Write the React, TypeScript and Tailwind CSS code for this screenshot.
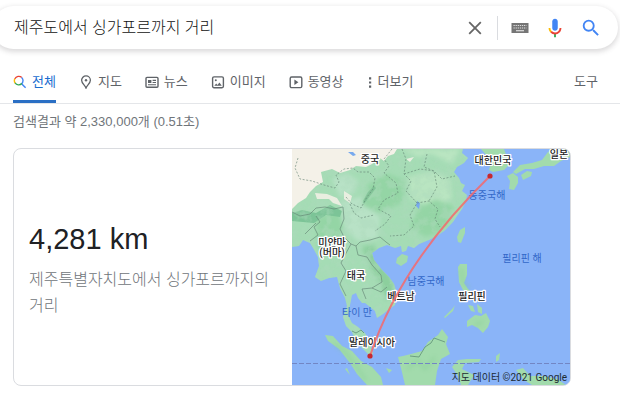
import React from 'react'

const searchPath =
  'M15.5 14h-.79l-.28-.27A6.471 6.471 0 0 0 16 9.5 6.5 6.5 0 1 0 9.5 16c1.61 0 3.09-.59 4.23-1.57l.27.28v.79l5 4.99L20.49 19l-4.99-5zm-6 0C7.01 14 5 11.99 5 9.5S7.01 5 9.5 5 14 7.01 14 9.5 11.99 14 9.5 14z'

const icons = {
  all: (
    <svg className="size-3.5" viewBox="0 0 14 14" fill="none" strokeWidth="1.4">
      <path d="M2.2 8.1A4.3 4.3 0 0 1 1.9 3.6" stroke="#fbbc05" />
      <path d="M1.9 3.8A4.3 4.3 0 0 1 8.8 2.6" stroke="#ea4335" />
      <path d="M8.6 2.4A4.3 4.3 0 0 1 8.6 8.8L12.6 12.8" stroke="#4285f4" />
      <path d="M8.8 8.6A4.3 4.3 0 0 1 2.1 7.9" stroke="#34a853" />
    </svg>
  ),
  map: (
    <svg className="size-3.5" viewBox="0 0 14 14" fill="none" stroke="currentColor" strokeWidth="1.3">
      <path d="M7 13C6.3 10.4 2.6 8.5 2.6 5.3a4.4 4.4 0 0 1 8.8 0C11.4 8.5 7.7 10.4 7 13z" />
      <circle cx="7" cy="5.3" r="1.2" fill="currentColor" stroke="none" />
    </svg>
  ),
  news: (
    <svg className="size-3.5" viewBox="0 0 14 14" fill="none" stroke="currentColor" strokeWidth="1.4">
      <rect x="1" y="2.4" width="12" height="9.8" rx="1" />
      <path d="M3 5h3.4v3H3z" fill="currentColor" stroke="none" />
      <path d="M7.6 5.4H11M7.6 7.5H11M3 9.7h8" strokeWidth="1.1" />
    </svg>
  ),
  image: (
    <svg className="size-3.5" viewBox="0 0 14 14" fill="none" stroke="currentColor" strokeWidth="1.4">
      <rect x="1.6" y="1.9" width="10.8" height="10.8" rx="1.4" />
      <path d="M3.3 10.8l1.9-2.4 1.3 1.5 1.9-2.4 2.4 3.3z" fill="currentColor" stroke="none" />
      <circle cx="4.8" cy="5.2" r="1" fill="currentColor" stroke="none" />
    </svg>
  ),
  video: (
    <svg className="size-3.5" viewBox="0 0 14 14" fill="none" stroke="currentColor" strokeWidth="1.4">
      <rect x="1.2" y="2" width="11.6" height="10.6" rx="1.4" />
      <path d="M5.4 4.6v5.4l4-2.7z" fill="currentColor" stroke="none" />
    </svg>
  ),
  more: (
    <svg className="h-3.5 w-1.5" viewBox="0 0 6 14" fill="currentColor">
      <path d="M2 2.2h2.2v2.2H2zM2 6.4h2.2v2.2H2zM2 10.6h2.2v2.2H2z" />
    </svg>
  ),
}

const tabs = [
  { label: '전체', icon: icons.all, active: true },
  { label: '지도', icon: icons.map },
  { label: '뉴스', icon: icons.news },
  { label: '이미지', icon: icons.image },
  { label: '동영상', icon: icons.video },
]

const countries = [
  { name: '중국', x: 78, y: 14 },
  { name: '미얀마', x: 40, y: 97 },
  { name: '(버마)', x: 40, y: 107 },
  { name: '대한민국', x: 201, y: 15 },
  { name: '일본', x: 267, y: 9 },
  { name: '태국', x: 64, y: 130 },
  { name: '베트남', x: 109, y: 151 },
  { name: '말레이시아', x: 80, y: 197 },
  { name: '필리핀', x: 180, y: 151 },
]

const seas = [
  { name: '동중국해', x: 195, y: 50 },
  { name: '필리핀 해', x: 230, y: 113 },
  { name: '남중국해', x: 134, y: 136 },
  { name: '타이 만', x: 65, y: 167 },
]

const mainland =
  'M0 0H171L170 4L176 9L172 14L165 18L162 23L167 29L169 34L173 36L170 42L175 46L174 52L170 60L165 67L161 73L152 82L145 87L137 91L127 95L122 99L116 97L114 102L110 103L109 97L103 99L95 96L87 99L80 104L82 111L90 121L97 128L102 135L105 145L103 156L96 161L91 165L85 169L83 162L78 158L73 154L70 154L66 149L64 144L60 146L58 156L56 166L60 174L66 178L73 184L78 194L81 205L77 206L69 198L63 191L60 183L54 177L51 168L55 157L53 149L48 139L45 128L37 129L29 132L23 128L27 117L26 108L21 99L18 94L11 91L7 97L0 98Z'

function WorldMap() {
  return (
    <svg className="block h-auto w-full" viewBox="0 0 278 236" role="img" aria-label="지도">
      <defs>
        <clipPath id="land">
          <path d={mainland} />
        </clipPath>
        <filter id="soft">
          <feGaussianBlur stdDeviation="2" />
        </filter>
        <filter id="relief" x="0" y="0" width="100%" height="100%">
          <feTurbulence type="fractalNoise" baseFrequency="0.1" numOctaves="4" seed="8" />
          <feColorMatrix values="0 0 0 0 0.42  0 0 0 0 0.7  0 0 0 0 0.5  4 0 0 0 -1.7" />
        </filter>
      </defs>
      <rect width="278" height="236" fill="#8ab4f8" />

      {/* mainland */}
      <path d={mainland} fill="#a5dcb5" />
      <g clipPath="url(#land)">
        <g filter="url(#soft)">
          <path d="M108 0l18 8 14-3 20 10 8-15zM116 28l24-6 18 8 2 20-20 8-22-8z" fill="#b9e5c1" />
          <path d="M48 52l22-4 18 20-2 22-20 2-14-12zM40 30l14-6 12 8-4 12-14 4z" fill="#b8e2c6" />
          <path d="M76 36l18-12 20 8-4 22-24 10-16-8zM128 58l16-8 18 8-8 22-20 8-16-10zM24 70l22-10 6 20-12 24-14-4z" fill="#94d5a5" />
          <path d="M70 98l12-2 4 12 14 22 4 16-10 6-4-14-12-20z" fill="#8ccf9d" />
        </g>
        <path d="M0 64l10-3 14 3 14-8 12 6-2 6-14-2-12 8-22-2z" fill="#7cc497" />
        <rect width="278" height="236" filter="url(#relief)" opacity="0.45" />
        <path d="M0 0H105L102 5L96 7L92 12L88 9L80 15L74 18L64 17L58 21L48 24L40 20L29 23L31 33L24 37L18 43L14 49L6 54L0 60Z" fill="#f4f1e8" />
        <path d="M23 44l12 1 10 4 5 8-9-3-4-4-12 0zM52 42l8 5-2 7-6-4zM114 10l8-2-4 5z" fill="#e9eee0" />
        <path d="M56 3l5 4 3-1-3-3zM125 52l3 2-1 6-3-3z" fill="#77a9ee" />
        <path d="M71 52l5-9 6-6 2 2-6 8-6 8z" fill="#72b98a" opacity="0.6" />
      </g>

      {/* provinces and borders */}
      <g fill="none" stroke="#5f7f70" strokeWidth="0.8" opacity="0.75">
        <g strokeDasharray="2 1.6">
          <path d="M6 9L3 19L8 30L20 32L32 36L43 39L47 33L44 26L52 20L61 19L66 23L77 23L83 29L81 40L75 48L69 59L60 55L54 48" />
          <path d="M100 0L92 10L97 17L92 24L104 34L106 44L92 51L86 60L99 67L93 75L83 82" />
          <path d="M110 0L114 10L112 25L119 32L114 42L125 54L118 66L122 77L112 86L98 87M125 54L137 52L146 60L143 70L148 78M112 25L128 20L142 22L150 30L163 27M135 5L132 18L142 22L145 38L137 52M58 55L62 64L69 69L82 66" />
        </g>
        <path d="M0 63L8 67L18 65L24 59L33 58L42 60L51 58L52 70L48 80L52 88L59 95L64 97L68 93L78 91L88 88L94 93L98 96" />
        <path d="M24 67L28 73L22 78L26 86L18 92M24 74L13 85M59 95L53 106L49 114L54 122L48 135L54 147M64 97L66 106L75 108L80 116L89 126L90 133L80 139L70 140L74 150M80 139L89 143L95 138" />
      </g>

      {/* islands */}
      <g fill="#a2dbac">
        <path d="M105 109l5-4 6 2-1 6-6 4-5-3zM165 88l3-7 5-3 0 6-4 10-3-1z" />
        <path d="M189 0h23l3 8 2 8-5 5-11 2-4-2 2-8-4-6z" />
        <path d="M215 27l6-3 5 4 0 6-4 7-5-1 1-8zM229 26l6-4 5 1-1 4-8 4zM221 23l7-7 12-2 10-3 6-8 6-3h16v8l-9 4-7 5-10 0-10 3-9 0-9 5z" />
        <path d="M166 118l2-3 7 0 0 11-3 8 4 6 5 4-1 4-8-5-5-10zM152 168l9-9 2-3-2 6-8 7zM176 156l5 1 2 6-4-1zM185 155l5 4 0 6-4-2zM175 172l8-6 6 1 5-3 4 8-2 6-5 6-5-5-6-3-5 2z" />
        <path d="M33 186l8 1 9 10 10 5 9 10 11 6 9 10 2 8H75L65 225L58 214L47 200L36 192z" />
        <path d="M106 208l5-1 8-2 11-3 6-9 10-7 4-6 6 8-2 7 4 10-9 5-4 12-2 14H113L109 219z" />
        <path d="M160 218l6-7 9-1 14 0-2 3-14 1-3 6 12 6-6 10h-7l-3-9zM204 207l4-3-1 7-3 2zM224 221l7-2 7 8h13l14 3 9 6H240l-8-5z" />
        <path d="M58 226l-5-6 2-1zM94 219l6 2-3 3z" />
      </g>
      <path d="M118 207l9 1 6-10 6-4 3-5 11 4M60 182l4 2 5-3 3 3" fill="none" stroke="#5f8f78" strokeWidth="0.8" />
      <path d="M42 195l11 8 12 15 9 14M115 220l10-8 8 8 10-12M169 120l2 13 6 6M183 176l8-3" fill="none" stroke="#83cb92" strokeWidth="3" opacity="0.4" filter="url(#soft)" />
      <path d="M0 214.5H278" stroke="#7286c4" strokeDasharray="5 2" />

      {/* labels */}
      <g className="font-['Roboto','Noto_Sans_CJK_KR',sans-serif] text-[10px]" textAnchor="middle">
        {seas.map((sea) => (
          <text key={sea.name} x={sea.x} y={sea.y} fill="#3267c8">{sea.name}</text>
        ))}
        <g className="font-medium" fill="#222" stroke="#fff" strokeWidth="2.5" strokeLinejoin="round" paintOrder="stroke">
          {countries.map((country) => (
            <text key={country.name} x={country.x} y={country.y}>{country.name}</text>
          ))}
        </g>
        <text x="275" y="232" textAnchor="end" fill="#1c2b33">지도 데이터 ©2021 Google</text>
      </g>

      <path d="M198 27Q108 115 78 207" fill="none" stroke="#f5696c" strokeOpacity="0.85" strokeWidth="2" />
      <circle cx="198" cy="27" r="2.6" fill="#c5292f" />
      <circle cx="78" cy="207" r="2.6" fill="#c5292f" />
    </svg>
  )
}

export default function App() {
  return (
    <div className="min-h-screen overflow-hidden bg-white pt-1.5 font-['Liberation_Sans','Noto_Sans_CJK_KR',sans-serif] text-[#5f6368]">
      <form
        className="-ml-2 mr-0.5 flex h-[43px] items-center rounded-full bg-white pl-[22px] pr-4 shadow-[0_2px_5px_1px_rgba(64,60,67,0.18)]"
        onSubmit={(e) => e.preventDefault()}
      >
        <input
          className="min-w-0 flex-1 bg-transparent text-base font-light text-[#111] outline-none"
          type="text"
          aria-label="검색"
          defaultValue="제주도에서 싱가포르까지 거리"
        />
        <button type="button" aria-label="지우기" className="mr-3">
          <svg className="size-5" viewBox="0 0 20 20" fill="none" stroke="#666" strokeWidth="1.8">
            <path d="M4.2 4.2l11.6 11.6M15.8 4.2L4.2 15.8" />
          </svg>
        </button>
        <span className="mr-3 h-6 w-px bg-[#dadce0]" />
        <button type="button" aria-label="키보드" className="mr-3.5">
          <svg className="size-5" viewBox="0 0 20 20">
            <rect x="1.5" y="5" width="17" height="10" fill="#757575" />
            <path d="M3.5 7.5h13M3.5 10h13" stroke="#ddd" strokeWidth="1.2" strokeDasharray="1.3 .8" />
            <path d="M6 12.7h8" stroke="#ddd" strokeWidth="1.2" />
          </svg>
        </button>
        <button type="button" aria-label="음성 검색" className="mr-3.5">
          <svg className="size-[22px]" viewBox="0 0 24 24">
            <path fill="#4285f4" d="M12 15c1.66 0 3-1.31 3-2.97V5.01C15 3.35 13.66 2 12 2S9 3.34 9 5.01v7.02C9 13.69 10.34 15 12 15z" />
            <path fill="#34a853" d="M11 18.08h2V22h-2z" />
            <path fill="#fbbc05" d="M7.05 16.87C5.78 15.54 5 14.04 5 12h2c0 1.45.56 2.42 1.47 3.38v.32l-1.15 1.18z" />
            <path fill="#ea4335" d="M12 16.93a4.97 5.25 0 0 1-3.54-1.55l-1.41 1.49C8.31 18.21 10.07 19 12 19c3.87 0 6.99-2.92 6.99-7H17c0 2.92-2.24 4.93-5 4.93z" />
          </svg>
        </button>
        <button type="submit" aria-label="검색">
          <svg className="size-[22px]" viewBox="0 0 24 24" fill="#4285f4">
            <path d={searchPath} />
          </svg>
        </button>
      </form>

      <nav className="mt-3 flex h-[43px] items-stretch border-b border-[#e4e6e9] pl-[13px] pr-[22px] text-[13px]">
        <div className="flex flex-1 gap-[23px]">
          {tabs.map((tab) => (
            <a
              key={tab.label}
              href="#"
              className={
                tab.active
                  ? 'flex items-center gap-[5px] border-b-3 border-[#2a6fc4] pt-0.5 text-[#1a6dd0]'
                  : 'flex items-center gap-[5px] border-b-3 border-transparent pt-0.5'
              }
            >
              {tab.icon}
              {tab.label}
            </a>
          ))}
          <button type="button" className="flex items-center gap-[5px] border-b-3 border-transparent pt-0.5">
            {icons.more}
            더보기
          </button>
        </div>
        <button type="button" className="border-b-3 border-transparent pt-0.5">도구</button>
      </nav>

      <main className="px-[13px]">
        <p className="pt-2 text-[13px] leading-5 text-[#70757a]">검색결과 약 2,330,000개 (0.51초)</p>
        <section className="mt-4 flex max-w-[558px] overflow-hidden rounded-lg border border-[#dadce0]">
          <div className="flex flex-1 flex-col justify-center pl-[15px] pr-3 pt-1.5">
            <h2 className="text-[29px] leading-9 text-[#202124]">4,281 km</h2>
            <p className="mt-2.5 text-base leading-[26px] font-light break-keep text-[#70757a]">
              제주특별자치도에서 싱가포르까지의 거리
            </p>
          </div>
          <div className="w-1/2 bg-[#8ab4f8]">
            <WorldMap />
          </div>
        </section>
      </main>
    </div>
  )
}
